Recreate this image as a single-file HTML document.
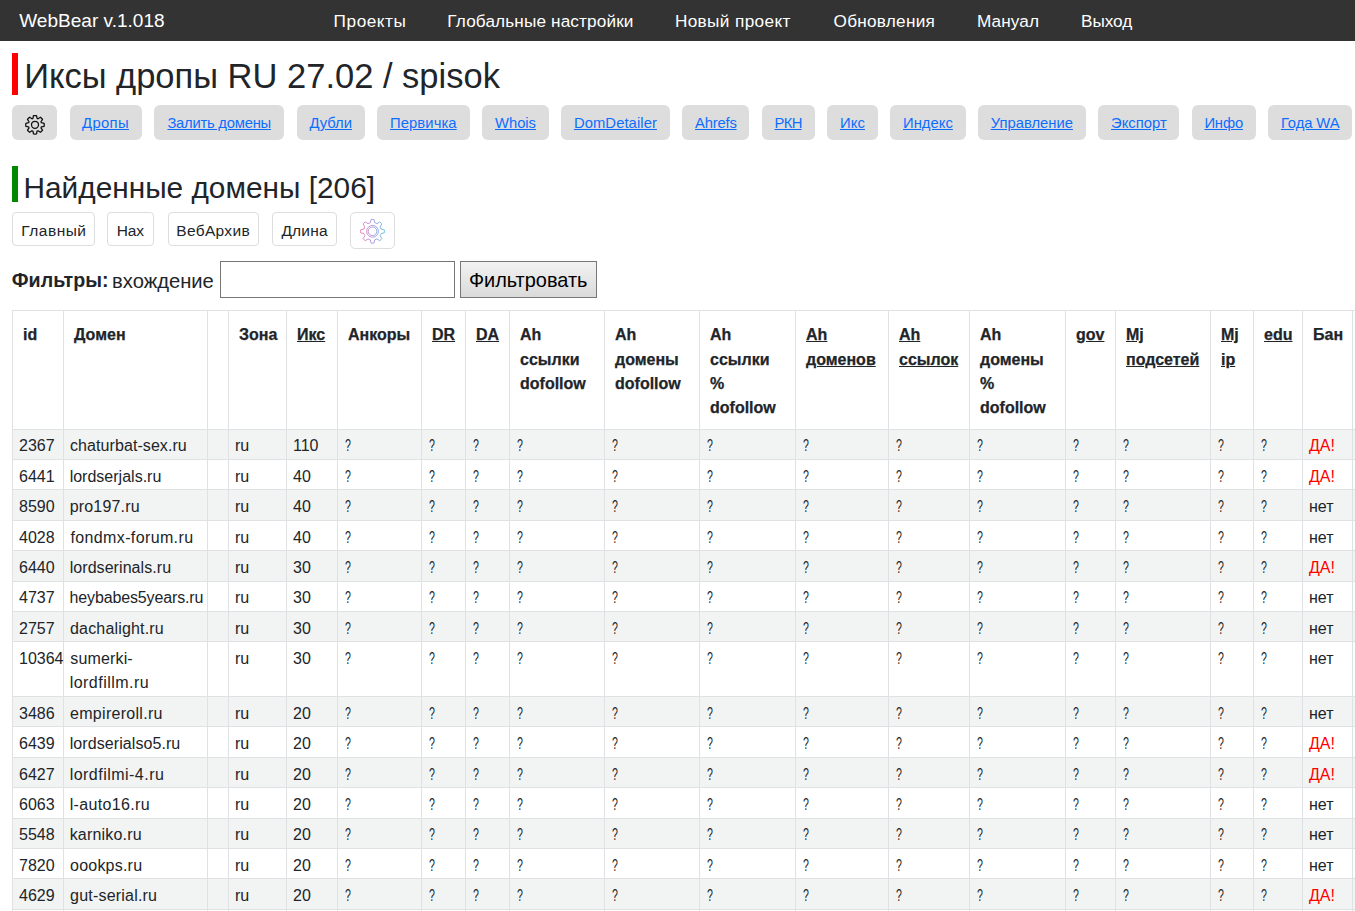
<!DOCTYPE html>
<html><head><meta charset="utf-8"><title>WebBear</title>
<style>
html,body{margin:0;padding:0;background:#fff;}
body{width:1355px;height:911px;overflow:hidden;position:relative;font-family:"Liberation Sans",sans-serif;color:#212529;}
.t{position:absolute;white-space:pre;line-height:1;}
.b{position:absolute;}
</style></head><body>
<div class="b" style="left:0px;top:0px;width:1355px;height:41px;background:#333;"></div>
<div class="t" style="left:19.20px;top:11.46px;font-size:19.06px;color:#fff;">WebBear v.1.018</div>
<div class="t" style="left:333.62px;top:13.34px;font-size:17.2px;color:#fff;letter-spacing:0.554px;">Проекты</div>
<div class="t" style="left:447.32px;top:13.34px;font-size:17.2px;color:#fff;letter-spacing:0.131px;">Глобальные настройки</div>
<div class="t" style="left:674.92px;top:13.34px;font-size:17.2px;color:#fff;letter-spacing:0.371px;">Новый проект</div>
<div class="t" style="left:833.53px;top:13.34px;font-size:17.2px;color:#fff;letter-spacing:0.258px;">Обновления</div>
<div class="t" style="left:976.92px;top:13.34px;font-size:17.2px;color:#fff;letter-spacing:0.124px;">Мануал</div>
<div class="t" style="left:1081.02px;top:13.34px;font-size:17.2px;color:#fff;letter-spacing:-0.049px;">Выход</div>
<div class="b" style="left:12px;top:53px;width:6px;height:42px;background:#f00;"></div>
<div class="t" style="left:24.14px;top:59.48px;font-size:34.51px;color:#212529;">Иксы дропы RU 27.02 / spisok</div>
<div class="b" style="left:12px;top:105px;width:45px;height:35px;background:#ddd;border-radius:6px;"></div>
<div class="b" style="left:70px;top:105px;width:72px;height:35px;background:#ddd;border-radius:6px;"></div>
<div class="t" style="left:82.00px;top:116.17px;font-size:14.8px;color:#0d6efd;text-decoration:underline;letter-spacing:0.372px;">Дропы</div>
<div class="b" style="left:154px;top:105px;width:130px;height:35px;background:#ddd;border-radius:6px;"></div>
<div class="t" style="left:167.40px;top:116.17px;font-size:14.8px;color:#0d6efd;text-decoration:underline;letter-spacing:-0.243px;">Залить домены</div>
<div class="b" style="left:297px;top:105px;width:68px;height:35px;background:#ddd;border-radius:6px;"></div>
<div class="t" style="left:309.40px;top:116.17px;font-size:14.8px;color:#0d6efd;text-decoration:underline;letter-spacing:-0.006px;">Дубли</div>
<div class="b" style="left:377px;top:105px;width:93px;height:35px;background:#ddd;border-radius:6px;"></div>
<div class="t" style="left:390.00px;top:116.17px;font-size:14.8px;color:#0d6efd;text-decoration:underline;letter-spacing:0.091px;">Первичка</div>
<div class="b" style="left:482px;top:105px;width:67px;height:35px;background:#ddd;border-radius:6px;"></div>
<div class="t" style="left:495.00px;top:116.17px;font-size:14.8px;color:#0d6efd;text-decoration:underline;letter-spacing:-0.024px;">Whois</div>
<div class="b" style="left:561px;top:105px;width:109px;height:35px;background:#ddd;border-radius:6px;"></div>
<div class="t" style="left:573.90px;top:116.17px;font-size:14.8px;color:#0d6efd;text-decoration:underline;letter-spacing:0.077px;">DomDetailer</div>
<div class="b" style="left:682px;top:105px;width:66.5px;height:35px;background:#ddd;border-radius:6px;"></div>
<div class="t" style="left:695.00px;top:116.17px;font-size:14.8px;color:#0d6efd;text-decoration:underline;letter-spacing:-0.196px;">Ahrefs</div>
<div class="b" style="left:762px;top:105px;width:53px;height:35px;background:#ddd;border-radius:6px;"></div>
<div class="t" style="left:774.60px;top:116.17px;font-size:14.8px;color:#0d6efd;text-decoration:underline;letter-spacing:-0.694px;">РКН</div>
<div class="b" style="left:827px;top:105px;width:51px;height:35px;background:#ddd;border-radius:6px;"></div>
<div class="t" style="left:840.00px;top:116.17px;font-size:14.8px;color:#0d6efd;text-decoration:underline;letter-spacing:0.107px;">Икс</div>
<div class="b" style="left:890px;top:105px;width:76px;height:35px;background:#ddd;border-radius:6px;"></div>
<div class="t" style="left:903.00px;top:116.17px;font-size:14.8px;color:#0d6efd;text-decoration:underline;letter-spacing:0.03px;">Индекс</div>
<div class="b" style="left:978px;top:105px;width:108px;height:35px;background:#ddd;border-radius:6px;"></div>
<div class="t" style="left:990.70px;top:116.17px;font-size:14.8px;color:#0d6efd;text-decoration:underline;letter-spacing:0.002px;">Управление</div>
<div class="b" style="left:1098px;top:105px;width:81px;height:35px;background:#ddd;border-radius:6px;"></div>
<div class="t" style="left:1111.00px;top:116.17px;font-size:14.8px;color:#0d6efd;text-decoration:underline;letter-spacing:0.013px;">Экспорт</div>
<div class="b" style="left:1192px;top:105px;width:64px;height:35px;background:#ddd;border-radius:6px;"></div>
<div class="t" style="left:1204.40px;top:116.17px;font-size:14.8px;color:#0d6efd;text-decoration:underline;letter-spacing:-0.155px;">Инфо</div>
<div class="b" style="left:1268px;top:105px;width:84px;height:35px;background:#ddd;border-radius:6px;"></div>
<div class="t" style="left:1280.90px;top:116.17px;font-size:14.8px;color:#0d6efd;text-decoration:underline;letter-spacing:-0.086px;">Года WA</div>
<div class="b" style="left:12px;top:166px;width:6px;height:36px;background:#080;"></div>
<div class="t" style="left:23.51px;top:172.55px;font-size:29.82px;color:#212529;">Найденные домены [206]</div>
<div class="b" style="left:12px;top:212px;width:82.5px;height:34px;border:1px solid #ddd;border-radius:4px;box-sizing:border-box;"></div>
<div class="t" style="left:21.26px;top:223.48px;font-size:15.5px;color:#212529;letter-spacing:0.493px;">Главный</div>
<div class="b" style="left:107px;top:212px;width:46.69999999999999px;height:34px;border:1px solid #ddd;border-radius:4px;box-sizing:border-box;"></div>
<div class="t" style="left:116.76px;top:223.48px;font-size:15.5px;color:#212529;letter-spacing:-0.098px;">Нах</div>
<div class="b" style="left:167.5px;top:212px;width:91.0px;height:34px;border:1px solid #ddd;border-radius:4px;box-sizing:border-box;"></div>
<div class="t" style="left:176.36px;top:223.48px;font-size:15.5px;color:#212529;letter-spacing:0.313px;">ВебАрхив</div>
<div class="b" style="left:272.3px;top:212px;width:65.19999999999999px;height:34px;border:1px solid #ddd;border-radius:4px;box-sizing:border-box;"></div>
<div class="t" style="left:281.42px;top:223.48px;font-size:15.5px;color:#212529;letter-spacing:0.21px;">Длина</div>
<div class="b" style="left:350px;top:212px;width:45px;height:37px;border:1px solid #ddd;border-radius:5px;box-sizing:border-box;"></div>
<div class="t" style="left:11.81px;top:271.05px;font-size:19.67px;font-weight:bold;color:#212529;">Фильтры:</div>
<div class="t" style="left:112.09px;top:270.60px;font-size:20.2px;color:#212529;">вхождение</div>
<div class="b" style="left:220px;top:261px;width:235px;height:37px;border:1px solid #767676;box-sizing:border-box;background:#fff;"></div>
<div class="b" style="left:460px;top:261px;width:137px;height:37px;border:1px solid #777;box-sizing:border-box;background:linear-gradient(#f2f2f2,#dadada);"></div>
<div class="t" style="left:468.90px;top:270.83px;font-size:19.93px;color:#000;">Фильтровать</div>
<svg class="b" style="left:0;top:0" width="80" height="160"><path d="M32.93 118.43L33.47 115.68A9.25 9.25 0 0 1 36.53 115.68L37.07 118.43A6.7 6.7 0 0 1 38.04 118.83L40.37 117.27A9.25 9.25 0 0 1 42.53 119.43L40.97 121.76A6.7 6.7 0 0 1 41.37 122.73L44.12 123.27A9.25 9.25 0 0 1 44.12 126.33L41.37 126.87A6.7 6.7 0 0 1 40.97 127.84L42.53 130.17A9.25 9.25 0 0 1 40.37 132.33L38.04 130.77A6.7 6.7 0 0 1 37.07 131.17L36.53 133.92A9.25 9.25 0 0 1 33.47 133.92L32.93 131.17A6.7 6.7 0 0 1 31.96 130.77L29.63 132.33A9.25 9.25 0 0 1 27.47 130.17L29.03 127.84A6.7 6.7 0 0 1 28.63 126.87L25.88 126.33A9.25 9.25 0 0 1 25.88 123.27L28.63 122.73A6.7 6.7 0 0 1 29.03 121.76L27.47 119.43A9.25 9.25 0 0 1 29.63 117.27L31.96 118.83A6.7 6.7 0 0 1 32.93 118.43Z" fill="none" stroke="#111" stroke-width="1.3" stroke-linejoin="round"/><circle cx="35" cy="124.8" r="3.5" fill="none" stroke="#111" stroke-width="1.3"/></svg>
<svg class="b" style="left:0;top:0" width="420" height="260"><defs><linearGradient id="gg" x1="360" y1="0" x2="385" y2="0" gradientUnits="userSpaceOnUse"><stop offset="0" stop-color="#e8508c"/><stop offset="0.5" stop-color="#8a6fd8"/><stop offset="1" stop-color="#2ba8e0"/></linearGradient></defs><path d="M370.22 222.80L371.05 219.49A11.9 11.9 0 0 1 373.95 219.49L374.78 222.80A8.8 8.8 0 0 1 376.90 223.68L379.83 221.92A11.9 11.9 0 0 1 381.88 223.97L380.12 226.90A8.8 8.8 0 0 1 381.00 229.02L384.31 229.85A11.9 11.9 0 0 1 384.31 232.75L381.00 233.58A8.8 8.8 0 0 1 380.12 235.70L381.88 238.63A11.9 11.9 0 0 1 379.83 240.68L376.90 238.92A8.8 8.8 0 0 1 374.78 239.80L373.95 243.11A11.9 11.9 0 0 1 371.05 243.11L370.22 239.80A8.8 8.8 0 0 1 368.10 238.92L365.17 240.68A11.9 11.9 0 0 1 363.12 238.63L364.88 235.70A8.8 8.8 0 0 1 364.00 233.58L360.69 232.75A11.9 11.9 0 0 1 360.69 229.85L364.00 229.02A8.8 8.8 0 0 1 364.88 226.90L363.12 223.97A11.9 11.9 0 0 1 365.17 221.92L368.10 223.68A8.8 8.8 0 0 1 370.22 222.80Z" fill="none" stroke="url(#gg)" stroke-width="0.8" stroke-opacity="0.85" stroke-linejoin="round"/><circle cx="372.5" cy="231.3" r="5.9" fill="none" stroke="url(#gg)" stroke-width="0.8" stroke-opacity="0.85"/><circle cx="372.5" cy="231.3" r="4.3" fill="none" stroke="url(#gg)" stroke-width="0.8" stroke-opacity="0.85"/></svg>
<div class="b" style="left:13px;top:430px;width:1342px;height:29px;background:#f2f3f3;"></div>
<div class="b" style="left:13px;top:490px;width:1342px;height:30px;background:#f2f3f3;"></div>
<div class="b" style="left:13px;top:551px;width:1342px;height:30px;background:#f2f3f3;"></div>
<div class="b" style="left:13px;top:612px;width:1342px;height:29px;background:#f2f3f3;"></div>
<div class="b" style="left:13px;top:697px;width:1342px;height:29px;background:#f2f3f3;"></div>
<div class="b" style="left:13px;top:758px;width:1342px;height:29px;background:#f2f3f3;"></div>
<div class="b" style="left:13px;top:819px;width:1342px;height:29px;background:#f2f3f3;"></div>
<div class="b" style="left:13px;top:879px;width:1342px;height:30px;background:#f2f3f3;"></div>
<div class="b" style="left:12px;top:310px;width:1343px;height:1px;background:#dfe1e4;"></div>
<div class="b" style="left:12px;top:429px;width:1343px;height:1px;background:#dfe1e4;"></div>
<div class="b" style="left:12px;top:459px;width:1343px;height:1px;background:#dfe1e4;"></div>
<div class="b" style="left:12px;top:489px;width:1343px;height:1px;background:#dfe1e4;"></div>
<div class="b" style="left:12px;top:520px;width:1343px;height:1px;background:#dfe1e4;"></div>
<div class="b" style="left:12px;top:550px;width:1343px;height:1px;background:#dfe1e4;"></div>
<div class="b" style="left:12px;top:581px;width:1343px;height:1px;background:#dfe1e4;"></div>
<div class="b" style="left:12px;top:611px;width:1343px;height:1px;background:#dfe1e4;"></div>
<div class="b" style="left:12px;top:641px;width:1343px;height:1px;background:#dfe1e4;"></div>
<div class="b" style="left:12px;top:696px;width:1343px;height:1px;background:#dfe1e4;"></div>
<div class="b" style="left:12px;top:726px;width:1343px;height:1px;background:#dfe1e4;"></div>
<div class="b" style="left:12px;top:757px;width:1343px;height:1px;background:#dfe1e4;"></div>
<div class="b" style="left:12px;top:787px;width:1343px;height:1px;background:#dfe1e4;"></div>
<div class="b" style="left:12px;top:818px;width:1343px;height:1px;background:#dfe1e4;"></div>
<div class="b" style="left:12px;top:848px;width:1343px;height:1px;background:#dfe1e4;"></div>
<div class="b" style="left:12px;top:878px;width:1343px;height:1px;background:#dfe1e4;"></div>
<div class="b" style="left:12px;top:909px;width:1343px;height:1px;background:#dfe1e4;"></div>
<div class="b" style="left:12px;top:310px;width:1px;height:601px;background:#dfe1e4;"></div>
<div class="b" style="left:63px;top:310px;width:1px;height:601px;background:#dfe1e4;"></div>
<div class="b" style="left:207px;top:310px;width:1px;height:601px;background:#dfe1e4;"></div>
<div class="b" style="left:228px;top:310px;width:1px;height:601px;background:#dfe1e4;"></div>
<div class="b" style="left:286px;top:310px;width:1px;height:601px;background:#dfe1e4;"></div>
<div class="b" style="left:337px;top:310px;width:1px;height:601px;background:#dfe1e4;"></div>
<div class="b" style="left:421px;top:310px;width:1px;height:601px;background:#dfe1e4;"></div>
<div class="b" style="left:465px;top:310px;width:1px;height:601px;background:#dfe1e4;"></div>
<div class="b" style="left:509px;top:310px;width:1px;height:601px;background:#dfe1e4;"></div>
<div class="b" style="left:604px;top:310px;width:1px;height:601px;background:#dfe1e4;"></div>
<div class="b" style="left:699px;top:310px;width:1px;height:601px;background:#dfe1e4;"></div>
<div class="b" style="left:795px;top:310px;width:1px;height:601px;background:#dfe1e4;"></div>
<div class="b" style="left:888px;top:310px;width:1px;height:601px;background:#dfe1e4;"></div>
<div class="b" style="left:969px;top:310px;width:1px;height:601px;background:#dfe1e4;"></div>
<div class="b" style="left:1065px;top:310px;width:1px;height:601px;background:#dfe1e4;"></div>
<div class="b" style="left:1115px;top:310px;width:1px;height:601px;background:#dfe1e4;"></div>
<div class="b" style="left:1210px;top:310px;width:1px;height:601px;background:#dfe1e4;"></div>
<div class="b" style="left:1253px;top:310px;width:1px;height:601px;background:#dfe1e4;"></div>
<div class="b" style="left:1302px;top:310px;width:1px;height:601px;background:#dfe1e4;"></div>
<div class="b" style="left:1352px;top:310px;width:1px;height:601px;background:#dfe1e4;"></div>
<div class="t" style="left:23.00px;top:327.25px;font-size:16px;font-weight:bold;color:#212529;-webkit-text-stroke:0.25px #212529;">id</div>
<div class="t" style="left:74.00px;top:327.25px;font-size:16px;font-weight:bold;color:#212529;-webkit-text-stroke:0.25px #212529;">Домен</div>
<div class="t" style="left:239.00px;top:327.25px;font-size:16px;font-weight:bold;color:#212529;-webkit-text-stroke:0.25px #212529;">Зона</div>
<div class="t" style="left:297.00px;top:327.25px;font-size:16px;font-weight:bold;color:#212529;text-decoration:underline;-webkit-text-stroke:0.25px #212529;">Икс</div>
<div class="t" style="left:348.00px;top:327.25px;font-size:16px;font-weight:bold;color:#212529;-webkit-text-stroke:0.25px #212529;">Анкоры</div>
<div class="t" style="left:432.00px;top:327.25px;font-size:16px;font-weight:bold;color:#212529;text-decoration:underline;-webkit-text-stroke:0.25px #212529;">DR</div>
<div class="t" style="left:476.00px;top:327.25px;font-size:16px;font-weight:bold;color:#212529;text-decoration:underline;-webkit-text-stroke:0.25px #212529;">DA</div>
<div class="t" style="left:520.00px;top:327.25px;font-size:16px;font-weight:bold;color:#212529;-webkit-text-stroke:0.25px #212529;">Ah</div>
<div class="t" style="left:520.00px;top:351.55px;font-size:16px;font-weight:bold;color:#212529;-webkit-text-stroke:0.25px #212529;">ссылки</div>
<div class="t" style="left:520.00px;top:375.85px;font-size:16px;font-weight:bold;color:#212529;-webkit-text-stroke:0.25px #212529;">dofollow</div>
<div class="t" style="left:615.00px;top:327.25px;font-size:16px;font-weight:bold;color:#212529;-webkit-text-stroke:0.25px #212529;">Ah</div>
<div class="t" style="left:615.00px;top:351.55px;font-size:16px;font-weight:bold;color:#212529;-webkit-text-stroke:0.25px #212529;">домены</div>
<div class="t" style="left:615.00px;top:375.85px;font-size:16px;font-weight:bold;color:#212529;-webkit-text-stroke:0.25px #212529;">dofollow</div>
<div class="t" style="left:710.00px;top:327.25px;font-size:16px;font-weight:bold;color:#212529;-webkit-text-stroke:0.25px #212529;">Ah</div>
<div class="t" style="left:710.00px;top:351.55px;font-size:16px;font-weight:bold;color:#212529;-webkit-text-stroke:0.25px #212529;">ссылки</div>
<div class="t" style="left:710.00px;top:375.85px;font-size:16px;font-weight:bold;color:#212529;-webkit-text-stroke:0.25px #212529;">%</div>
<div class="t" style="left:710.00px;top:400.15px;font-size:16px;font-weight:bold;color:#212529;-webkit-text-stroke:0.25px #212529;">dofollow</div>
<div class="t" style="left:806.00px;top:327.25px;font-size:16px;font-weight:bold;color:#212529;text-decoration:underline;-webkit-text-stroke:0.25px #212529;">Ah</div>
<div class="t" style="left:806.00px;top:351.55px;font-size:16px;font-weight:bold;color:#212529;text-decoration:underline;-webkit-text-stroke:0.25px #212529;">доменов</div>
<div class="t" style="left:899.00px;top:327.25px;font-size:16px;font-weight:bold;color:#212529;text-decoration:underline;-webkit-text-stroke:0.25px #212529;">Ah</div>
<div class="t" style="left:899.00px;top:351.55px;font-size:16px;font-weight:bold;color:#212529;text-decoration:underline;-webkit-text-stroke:0.25px #212529;">ссылок</div>
<div class="t" style="left:980.00px;top:327.25px;font-size:16px;font-weight:bold;color:#212529;-webkit-text-stroke:0.25px #212529;">Ah</div>
<div class="t" style="left:980.00px;top:351.55px;font-size:16px;font-weight:bold;color:#212529;-webkit-text-stroke:0.25px #212529;">домены</div>
<div class="t" style="left:980.00px;top:375.85px;font-size:16px;font-weight:bold;color:#212529;-webkit-text-stroke:0.25px #212529;">%</div>
<div class="t" style="left:980.00px;top:400.15px;font-size:16px;font-weight:bold;color:#212529;-webkit-text-stroke:0.25px #212529;">dofollow</div>
<div class="t" style="left:1076.00px;top:327.25px;font-size:16px;font-weight:bold;color:#212529;text-decoration:underline;-webkit-text-stroke:0.25px #212529;">gov</div>
<div class="t" style="left:1126.00px;top:327.25px;font-size:16px;font-weight:bold;color:#212529;text-decoration:underline;-webkit-text-stroke:0.25px #212529;">Mj</div>
<div class="t" style="left:1126.00px;top:351.55px;font-size:16px;font-weight:bold;color:#212529;text-decoration:underline;-webkit-text-stroke:0.25px #212529;">подсетей</div>
<div class="t" style="left:1221.00px;top:327.25px;font-size:16px;font-weight:bold;color:#212529;text-decoration:underline;-webkit-text-stroke:0.25px #212529;">Mj</div>
<div class="t" style="left:1221.00px;top:351.55px;font-size:16px;font-weight:bold;color:#212529;text-decoration:underline;-webkit-text-stroke:0.25px #212529;">ip</div>
<div class="t" style="left:1264.00px;top:327.25px;font-size:16px;font-weight:bold;color:#212529;text-decoration:underline;-webkit-text-stroke:0.25px #212529;">edu</div>
<div class="t" style="left:1313.00px;top:327.25px;font-size:16px;font-weight:bold;color:#212529;-webkit-text-stroke:0.25px #212529;">Бан</div>
<div class="t" style="left:19.00px;top:438.45px;font-size:16px;">2367</div>
<div class="t" style="left:70.06px;top:438.45px;font-size:16px;letter-spacing:0.072px;">chaturbat-sex.ru</div>
<div class="t" style="left:235.00px;top:438.45px;font-size:16px;">ru</div>
<div class="t" style="left:293.00px;top:438.45px;font-size:16px;">110</div>
<div class="t" style="left:344.80px;top:438.45px;font-size:16px;transform:scaleX(0.66);transform-origin:0 0;">?</div>
<div class="t" style="left:428.80px;top:438.45px;font-size:16px;transform:scaleX(0.66);transform-origin:0 0;">?</div>
<div class="t" style="left:472.80px;top:438.45px;font-size:16px;transform:scaleX(0.66);transform-origin:0 0;">?</div>
<div class="t" style="left:516.80px;top:438.45px;font-size:16px;transform:scaleX(0.66);transform-origin:0 0;">?</div>
<div class="t" style="left:611.80px;top:438.45px;font-size:16px;transform:scaleX(0.66);transform-origin:0 0;">?</div>
<div class="t" style="left:706.80px;top:438.45px;font-size:16px;transform:scaleX(0.66);transform-origin:0 0;">?</div>
<div class="t" style="left:802.80px;top:438.45px;font-size:16px;transform:scaleX(0.66);transform-origin:0 0;">?</div>
<div class="t" style="left:895.80px;top:438.45px;font-size:16px;transform:scaleX(0.66);transform-origin:0 0;">?</div>
<div class="t" style="left:976.80px;top:438.45px;font-size:16px;transform:scaleX(0.66);transform-origin:0 0;">?</div>
<div class="t" style="left:1072.80px;top:438.45px;font-size:16px;transform:scaleX(0.66);transform-origin:0 0;">?</div>
<div class="t" style="left:1122.80px;top:438.45px;font-size:16px;transform:scaleX(0.66);transform-origin:0 0;">?</div>
<div class="t" style="left:1217.80px;top:438.45px;font-size:16px;transform:scaleX(0.66);transform-origin:0 0;">?</div>
<div class="t" style="left:1260.80px;top:438.45px;font-size:16px;transform:scaleX(0.66);transform-origin:0 0;">?</div>
<div class="t" style="left:1309.00px;top:438.45px;font-size:16px;color:#f00;">ДА!</div>
<div class="t" style="left:19.00px;top:468.85px;font-size:16px;">6441</div>
<div class="t" style="left:69.66px;top:468.85px;font-size:16px;letter-spacing:0.006px;">lordserjals.ru</div>
<div class="t" style="left:235.00px;top:468.85px;font-size:16px;">ru</div>
<div class="t" style="left:293.00px;top:468.85px;font-size:16px;">40</div>
<div class="t" style="left:344.80px;top:468.85px;font-size:16px;transform:scaleX(0.66);transform-origin:0 0;">?</div>
<div class="t" style="left:428.80px;top:468.85px;font-size:16px;transform:scaleX(0.66);transform-origin:0 0;">?</div>
<div class="t" style="left:472.80px;top:468.85px;font-size:16px;transform:scaleX(0.66);transform-origin:0 0;">?</div>
<div class="t" style="left:516.80px;top:468.85px;font-size:16px;transform:scaleX(0.66);transform-origin:0 0;">?</div>
<div class="t" style="left:611.80px;top:468.85px;font-size:16px;transform:scaleX(0.66);transform-origin:0 0;">?</div>
<div class="t" style="left:706.80px;top:468.85px;font-size:16px;transform:scaleX(0.66);transform-origin:0 0;">?</div>
<div class="t" style="left:802.80px;top:468.85px;font-size:16px;transform:scaleX(0.66);transform-origin:0 0;">?</div>
<div class="t" style="left:895.80px;top:468.85px;font-size:16px;transform:scaleX(0.66);transform-origin:0 0;">?</div>
<div class="t" style="left:976.80px;top:468.85px;font-size:16px;transform:scaleX(0.66);transform-origin:0 0;">?</div>
<div class="t" style="left:1072.80px;top:468.85px;font-size:16px;transform:scaleX(0.66);transform-origin:0 0;">?</div>
<div class="t" style="left:1122.80px;top:468.85px;font-size:16px;transform:scaleX(0.66);transform-origin:0 0;">?</div>
<div class="t" style="left:1217.80px;top:468.85px;font-size:16px;transform:scaleX(0.66);transform-origin:0 0;">?</div>
<div class="t" style="left:1260.80px;top:468.85px;font-size:16px;transform:scaleX(0.66);transform-origin:0 0;">?</div>
<div class="t" style="left:1309.00px;top:468.85px;font-size:16px;color:#f00;">ДА!</div>
<div class="t" style="left:19.00px;top:499.25px;font-size:16px;">8590</div>
<div class="t" style="left:69.66px;top:499.25px;font-size:16px;letter-spacing:0.187px;">pro197.ru</div>
<div class="t" style="left:235.00px;top:499.25px;font-size:16px;">ru</div>
<div class="t" style="left:293.00px;top:499.25px;font-size:16px;">40</div>
<div class="t" style="left:344.80px;top:499.25px;font-size:16px;transform:scaleX(0.66);transform-origin:0 0;">?</div>
<div class="t" style="left:428.80px;top:499.25px;font-size:16px;transform:scaleX(0.66);transform-origin:0 0;">?</div>
<div class="t" style="left:472.80px;top:499.25px;font-size:16px;transform:scaleX(0.66);transform-origin:0 0;">?</div>
<div class="t" style="left:516.80px;top:499.25px;font-size:16px;transform:scaleX(0.66);transform-origin:0 0;">?</div>
<div class="t" style="left:611.80px;top:499.25px;font-size:16px;transform:scaleX(0.66);transform-origin:0 0;">?</div>
<div class="t" style="left:706.80px;top:499.25px;font-size:16px;transform:scaleX(0.66);transform-origin:0 0;">?</div>
<div class="t" style="left:802.80px;top:499.25px;font-size:16px;transform:scaleX(0.66);transform-origin:0 0;">?</div>
<div class="t" style="left:895.80px;top:499.25px;font-size:16px;transform:scaleX(0.66);transform-origin:0 0;">?</div>
<div class="t" style="left:976.80px;top:499.25px;font-size:16px;transform:scaleX(0.66);transform-origin:0 0;">?</div>
<div class="t" style="left:1072.80px;top:499.25px;font-size:16px;transform:scaleX(0.66);transform-origin:0 0;">?</div>
<div class="t" style="left:1122.80px;top:499.25px;font-size:16px;transform:scaleX(0.66);transform-origin:0 0;">?</div>
<div class="t" style="left:1217.80px;top:499.25px;font-size:16px;transform:scaleX(0.66);transform-origin:0 0;">?</div>
<div class="t" style="left:1260.80px;top:499.25px;font-size:16px;transform:scaleX(0.66);transform-origin:0 0;">?</div>
<div class="t" style="left:1309.00px;top:499.25px;font-size:16px;">нет</div>
<div class="t" style="left:19.00px;top:529.65px;font-size:16px;">4028</div>
<div class="t" style="left:70.46px;top:529.65px;font-size:16px;letter-spacing:0.373px;">fondmx-forum.ru</div>
<div class="t" style="left:235.00px;top:529.65px;font-size:16px;">ru</div>
<div class="t" style="left:293.00px;top:529.65px;font-size:16px;">40</div>
<div class="t" style="left:344.80px;top:529.65px;font-size:16px;transform:scaleX(0.66);transform-origin:0 0;">?</div>
<div class="t" style="left:428.80px;top:529.65px;font-size:16px;transform:scaleX(0.66);transform-origin:0 0;">?</div>
<div class="t" style="left:472.80px;top:529.65px;font-size:16px;transform:scaleX(0.66);transform-origin:0 0;">?</div>
<div class="t" style="left:516.80px;top:529.65px;font-size:16px;transform:scaleX(0.66);transform-origin:0 0;">?</div>
<div class="t" style="left:611.80px;top:529.65px;font-size:16px;transform:scaleX(0.66);transform-origin:0 0;">?</div>
<div class="t" style="left:706.80px;top:529.65px;font-size:16px;transform:scaleX(0.66);transform-origin:0 0;">?</div>
<div class="t" style="left:802.80px;top:529.65px;font-size:16px;transform:scaleX(0.66);transform-origin:0 0;">?</div>
<div class="t" style="left:895.80px;top:529.65px;font-size:16px;transform:scaleX(0.66);transform-origin:0 0;">?</div>
<div class="t" style="left:976.80px;top:529.65px;font-size:16px;transform:scaleX(0.66);transform-origin:0 0;">?</div>
<div class="t" style="left:1072.80px;top:529.65px;font-size:16px;transform:scaleX(0.66);transform-origin:0 0;">?</div>
<div class="t" style="left:1122.80px;top:529.65px;font-size:16px;transform:scaleX(0.66);transform-origin:0 0;">?</div>
<div class="t" style="left:1217.80px;top:529.65px;font-size:16px;transform:scaleX(0.66);transform-origin:0 0;">?</div>
<div class="t" style="left:1260.80px;top:529.65px;font-size:16px;transform:scaleX(0.66);transform-origin:0 0;">?</div>
<div class="t" style="left:1309.00px;top:529.65px;font-size:16px;">нет</div>
<div class="t" style="left:19.00px;top:560.05px;font-size:16px;">6440</div>
<div class="t" style="left:69.66px;top:560.05px;font-size:16px;letter-spacing:0.064px;">lordserinals.ru</div>
<div class="t" style="left:235.00px;top:560.05px;font-size:16px;">ru</div>
<div class="t" style="left:293.00px;top:560.05px;font-size:16px;">30</div>
<div class="t" style="left:344.80px;top:560.05px;font-size:16px;transform:scaleX(0.66);transform-origin:0 0;">?</div>
<div class="t" style="left:428.80px;top:560.05px;font-size:16px;transform:scaleX(0.66);transform-origin:0 0;">?</div>
<div class="t" style="left:472.80px;top:560.05px;font-size:16px;transform:scaleX(0.66);transform-origin:0 0;">?</div>
<div class="t" style="left:516.80px;top:560.05px;font-size:16px;transform:scaleX(0.66);transform-origin:0 0;">?</div>
<div class="t" style="left:611.80px;top:560.05px;font-size:16px;transform:scaleX(0.66);transform-origin:0 0;">?</div>
<div class="t" style="left:706.80px;top:560.05px;font-size:16px;transform:scaleX(0.66);transform-origin:0 0;">?</div>
<div class="t" style="left:802.80px;top:560.05px;font-size:16px;transform:scaleX(0.66);transform-origin:0 0;">?</div>
<div class="t" style="left:895.80px;top:560.05px;font-size:16px;transform:scaleX(0.66);transform-origin:0 0;">?</div>
<div class="t" style="left:976.80px;top:560.05px;font-size:16px;transform:scaleX(0.66);transform-origin:0 0;">?</div>
<div class="t" style="left:1072.80px;top:560.05px;font-size:16px;transform:scaleX(0.66);transform-origin:0 0;">?</div>
<div class="t" style="left:1122.80px;top:560.05px;font-size:16px;transform:scaleX(0.66);transform-origin:0 0;">?</div>
<div class="t" style="left:1217.80px;top:560.05px;font-size:16px;transform:scaleX(0.66);transform-origin:0 0;">?</div>
<div class="t" style="left:1260.80px;top:560.05px;font-size:16px;transform:scaleX(0.66);transform-origin:0 0;">?</div>
<div class="t" style="left:1309.00px;top:560.05px;font-size:16px;color:#f00;">ДА!</div>
<div class="t" style="left:19.00px;top:590.45px;font-size:16px;">4737</div>
<div class="t" style="left:69.58px;top:590.45px;font-size:16px;letter-spacing:-0.139px;">heybabes5years.ru</div>
<div class="t" style="left:235.00px;top:590.45px;font-size:16px;">ru</div>
<div class="t" style="left:293.00px;top:590.45px;font-size:16px;">30</div>
<div class="t" style="left:344.80px;top:590.45px;font-size:16px;transform:scaleX(0.66);transform-origin:0 0;">?</div>
<div class="t" style="left:428.80px;top:590.45px;font-size:16px;transform:scaleX(0.66);transform-origin:0 0;">?</div>
<div class="t" style="left:472.80px;top:590.45px;font-size:16px;transform:scaleX(0.66);transform-origin:0 0;">?</div>
<div class="t" style="left:516.80px;top:590.45px;font-size:16px;transform:scaleX(0.66);transform-origin:0 0;">?</div>
<div class="t" style="left:611.80px;top:590.45px;font-size:16px;transform:scaleX(0.66);transform-origin:0 0;">?</div>
<div class="t" style="left:706.80px;top:590.45px;font-size:16px;transform:scaleX(0.66);transform-origin:0 0;">?</div>
<div class="t" style="left:802.80px;top:590.45px;font-size:16px;transform:scaleX(0.66);transform-origin:0 0;">?</div>
<div class="t" style="left:895.80px;top:590.45px;font-size:16px;transform:scaleX(0.66);transform-origin:0 0;">?</div>
<div class="t" style="left:976.80px;top:590.45px;font-size:16px;transform:scaleX(0.66);transform-origin:0 0;">?</div>
<div class="t" style="left:1072.80px;top:590.45px;font-size:16px;transform:scaleX(0.66);transform-origin:0 0;">?</div>
<div class="t" style="left:1122.80px;top:590.45px;font-size:16px;transform:scaleX(0.66);transform-origin:0 0;">?</div>
<div class="t" style="left:1217.80px;top:590.45px;font-size:16px;transform:scaleX(0.66);transform-origin:0 0;">?</div>
<div class="t" style="left:1260.80px;top:590.45px;font-size:16px;transform:scaleX(0.66);transform-origin:0 0;">?</div>
<div class="t" style="left:1309.00px;top:590.45px;font-size:16px;">нет</div>
<div class="t" style="left:19.00px;top:620.85px;font-size:16px;">2757</div>
<div class="t" style="left:70.06px;top:620.85px;font-size:16px;letter-spacing:0.165px;">dachalight.ru</div>
<div class="t" style="left:235.00px;top:620.85px;font-size:16px;">ru</div>
<div class="t" style="left:293.00px;top:620.85px;font-size:16px;">30</div>
<div class="t" style="left:344.80px;top:620.85px;font-size:16px;transform:scaleX(0.66);transform-origin:0 0;">?</div>
<div class="t" style="left:428.80px;top:620.85px;font-size:16px;transform:scaleX(0.66);transform-origin:0 0;">?</div>
<div class="t" style="left:472.80px;top:620.85px;font-size:16px;transform:scaleX(0.66);transform-origin:0 0;">?</div>
<div class="t" style="left:516.80px;top:620.85px;font-size:16px;transform:scaleX(0.66);transform-origin:0 0;">?</div>
<div class="t" style="left:611.80px;top:620.85px;font-size:16px;transform:scaleX(0.66);transform-origin:0 0;">?</div>
<div class="t" style="left:706.80px;top:620.85px;font-size:16px;transform:scaleX(0.66);transform-origin:0 0;">?</div>
<div class="t" style="left:802.80px;top:620.85px;font-size:16px;transform:scaleX(0.66);transform-origin:0 0;">?</div>
<div class="t" style="left:895.80px;top:620.85px;font-size:16px;transform:scaleX(0.66);transform-origin:0 0;">?</div>
<div class="t" style="left:976.80px;top:620.85px;font-size:16px;transform:scaleX(0.66);transform-origin:0 0;">?</div>
<div class="t" style="left:1072.80px;top:620.85px;font-size:16px;transform:scaleX(0.66);transform-origin:0 0;">?</div>
<div class="t" style="left:1122.80px;top:620.85px;font-size:16px;transform:scaleX(0.66);transform-origin:0 0;">?</div>
<div class="t" style="left:1217.80px;top:620.85px;font-size:16px;transform:scaleX(0.66);transform-origin:0 0;">?</div>
<div class="t" style="left:1260.80px;top:620.85px;font-size:16px;transform:scaleX(0.66);transform-origin:0 0;">?</div>
<div class="t" style="left:1309.00px;top:620.85px;font-size:16px;">нет</div>
<div class="t" style="left:19.00px;top:651.25px;font-size:16px;">10364</div>
<div class="t" style="left:70.22px;top:651.25px;font-size:16px;letter-spacing:0.163px;">sumerki-</div>
<div class="t" style="left:69.66px;top:675.25px;font-size:16px;letter-spacing:0.475px;">lordfillm.ru</div>
<div class="t" style="left:235.00px;top:651.25px;font-size:16px;">ru</div>
<div class="t" style="left:293.00px;top:651.25px;font-size:16px;">30</div>
<div class="t" style="left:344.80px;top:651.25px;font-size:16px;transform:scaleX(0.66);transform-origin:0 0;">?</div>
<div class="t" style="left:428.80px;top:651.25px;font-size:16px;transform:scaleX(0.66);transform-origin:0 0;">?</div>
<div class="t" style="left:472.80px;top:651.25px;font-size:16px;transform:scaleX(0.66);transform-origin:0 0;">?</div>
<div class="t" style="left:516.80px;top:651.25px;font-size:16px;transform:scaleX(0.66);transform-origin:0 0;">?</div>
<div class="t" style="left:611.80px;top:651.25px;font-size:16px;transform:scaleX(0.66);transform-origin:0 0;">?</div>
<div class="t" style="left:706.80px;top:651.25px;font-size:16px;transform:scaleX(0.66);transform-origin:0 0;">?</div>
<div class="t" style="left:802.80px;top:651.25px;font-size:16px;transform:scaleX(0.66);transform-origin:0 0;">?</div>
<div class="t" style="left:895.80px;top:651.25px;font-size:16px;transform:scaleX(0.66);transform-origin:0 0;">?</div>
<div class="t" style="left:976.80px;top:651.25px;font-size:16px;transform:scaleX(0.66);transform-origin:0 0;">?</div>
<div class="t" style="left:1072.80px;top:651.25px;font-size:16px;transform:scaleX(0.66);transform-origin:0 0;">?</div>
<div class="t" style="left:1122.80px;top:651.25px;font-size:16px;transform:scaleX(0.66);transform-origin:0 0;">?</div>
<div class="t" style="left:1217.80px;top:651.25px;font-size:16px;transform:scaleX(0.66);transform-origin:0 0;">?</div>
<div class="t" style="left:1260.80px;top:651.25px;font-size:16px;transform:scaleX(0.66);transform-origin:0 0;">?</div>
<div class="t" style="left:1309.00px;top:651.25px;font-size:16px;">нет</div>
<div class="t" style="left:19.00px;top:705.85px;font-size:16px;">3486</div>
<div class="t" style="left:70.06px;top:705.85px;font-size:16px;letter-spacing:0.292px;">empireroll.ru</div>
<div class="t" style="left:235.00px;top:705.85px;font-size:16px;">ru</div>
<div class="t" style="left:293.00px;top:705.85px;font-size:16px;">20</div>
<div class="t" style="left:344.80px;top:705.85px;font-size:16px;transform:scaleX(0.66);transform-origin:0 0;">?</div>
<div class="t" style="left:428.80px;top:705.85px;font-size:16px;transform:scaleX(0.66);transform-origin:0 0;">?</div>
<div class="t" style="left:472.80px;top:705.85px;font-size:16px;transform:scaleX(0.66);transform-origin:0 0;">?</div>
<div class="t" style="left:516.80px;top:705.85px;font-size:16px;transform:scaleX(0.66);transform-origin:0 0;">?</div>
<div class="t" style="left:611.80px;top:705.85px;font-size:16px;transform:scaleX(0.66);transform-origin:0 0;">?</div>
<div class="t" style="left:706.80px;top:705.85px;font-size:16px;transform:scaleX(0.66);transform-origin:0 0;">?</div>
<div class="t" style="left:802.80px;top:705.85px;font-size:16px;transform:scaleX(0.66);transform-origin:0 0;">?</div>
<div class="t" style="left:895.80px;top:705.85px;font-size:16px;transform:scaleX(0.66);transform-origin:0 0;">?</div>
<div class="t" style="left:976.80px;top:705.85px;font-size:16px;transform:scaleX(0.66);transform-origin:0 0;">?</div>
<div class="t" style="left:1072.80px;top:705.85px;font-size:16px;transform:scaleX(0.66);transform-origin:0 0;">?</div>
<div class="t" style="left:1122.80px;top:705.85px;font-size:16px;transform:scaleX(0.66);transform-origin:0 0;">?</div>
<div class="t" style="left:1217.80px;top:705.85px;font-size:16px;transform:scaleX(0.66);transform-origin:0 0;">?</div>
<div class="t" style="left:1260.80px;top:705.85px;font-size:16px;transform:scaleX(0.66);transform-origin:0 0;">?</div>
<div class="t" style="left:1309.00px;top:705.85px;font-size:16px;">нет</div>
<div class="t" style="left:19.00px;top:736.25px;font-size:16px;">6439</div>
<div class="t" style="left:69.66px;top:736.25px;font-size:16px;letter-spacing:0.081px;">lordserialso5.ru</div>
<div class="t" style="left:235.00px;top:736.25px;font-size:16px;">ru</div>
<div class="t" style="left:293.00px;top:736.25px;font-size:16px;">20</div>
<div class="t" style="left:344.80px;top:736.25px;font-size:16px;transform:scaleX(0.66);transform-origin:0 0;">?</div>
<div class="t" style="left:428.80px;top:736.25px;font-size:16px;transform:scaleX(0.66);transform-origin:0 0;">?</div>
<div class="t" style="left:472.80px;top:736.25px;font-size:16px;transform:scaleX(0.66);transform-origin:0 0;">?</div>
<div class="t" style="left:516.80px;top:736.25px;font-size:16px;transform:scaleX(0.66);transform-origin:0 0;">?</div>
<div class="t" style="left:611.80px;top:736.25px;font-size:16px;transform:scaleX(0.66);transform-origin:0 0;">?</div>
<div class="t" style="left:706.80px;top:736.25px;font-size:16px;transform:scaleX(0.66);transform-origin:0 0;">?</div>
<div class="t" style="left:802.80px;top:736.25px;font-size:16px;transform:scaleX(0.66);transform-origin:0 0;">?</div>
<div class="t" style="left:895.80px;top:736.25px;font-size:16px;transform:scaleX(0.66);transform-origin:0 0;">?</div>
<div class="t" style="left:976.80px;top:736.25px;font-size:16px;transform:scaleX(0.66);transform-origin:0 0;">?</div>
<div class="t" style="left:1072.80px;top:736.25px;font-size:16px;transform:scaleX(0.66);transform-origin:0 0;">?</div>
<div class="t" style="left:1122.80px;top:736.25px;font-size:16px;transform:scaleX(0.66);transform-origin:0 0;">?</div>
<div class="t" style="left:1217.80px;top:736.25px;font-size:16px;transform:scaleX(0.66);transform-origin:0 0;">?</div>
<div class="t" style="left:1260.80px;top:736.25px;font-size:16px;transform:scaleX(0.66);transform-origin:0 0;">?</div>
<div class="t" style="left:1309.00px;top:736.25px;font-size:16px;color:#f00;">ДА!</div>
<div class="t" style="left:19.00px;top:766.65px;font-size:16px;">6427</div>
<div class="t" style="left:69.66px;top:766.65px;font-size:16px;letter-spacing:0.475px;">lordfilmi-4.ru</div>
<div class="t" style="left:235.00px;top:766.65px;font-size:16px;">ru</div>
<div class="t" style="left:293.00px;top:766.65px;font-size:16px;">20</div>
<div class="t" style="left:344.80px;top:766.65px;font-size:16px;transform:scaleX(0.66);transform-origin:0 0;">?</div>
<div class="t" style="left:428.80px;top:766.65px;font-size:16px;transform:scaleX(0.66);transform-origin:0 0;">?</div>
<div class="t" style="left:472.80px;top:766.65px;font-size:16px;transform:scaleX(0.66);transform-origin:0 0;">?</div>
<div class="t" style="left:516.80px;top:766.65px;font-size:16px;transform:scaleX(0.66);transform-origin:0 0;">?</div>
<div class="t" style="left:611.80px;top:766.65px;font-size:16px;transform:scaleX(0.66);transform-origin:0 0;">?</div>
<div class="t" style="left:706.80px;top:766.65px;font-size:16px;transform:scaleX(0.66);transform-origin:0 0;">?</div>
<div class="t" style="left:802.80px;top:766.65px;font-size:16px;transform:scaleX(0.66);transform-origin:0 0;">?</div>
<div class="t" style="left:895.80px;top:766.65px;font-size:16px;transform:scaleX(0.66);transform-origin:0 0;">?</div>
<div class="t" style="left:976.80px;top:766.65px;font-size:16px;transform:scaleX(0.66);transform-origin:0 0;">?</div>
<div class="t" style="left:1072.80px;top:766.65px;font-size:16px;transform:scaleX(0.66);transform-origin:0 0;">?</div>
<div class="t" style="left:1122.80px;top:766.65px;font-size:16px;transform:scaleX(0.66);transform-origin:0 0;">?</div>
<div class="t" style="left:1217.80px;top:766.65px;font-size:16px;transform:scaleX(0.66);transform-origin:0 0;">?</div>
<div class="t" style="left:1260.80px;top:766.65px;font-size:16px;transform:scaleX(0.66);transform-origin:0 0;">?</div>
<div class="t" style="left:1309.00px;top:766.65px;font-size:16px;color:#f00;">ДА!</div>
<div class="t" style="left:19.00px;top:797.05px;font-size:16px;">6063</div>
<div class="t" style="left:69.66px;top:797.05px;font-size:16px;letter-spacing:0.34px;">l-auto16.ru</div>
<div class="t" style="left:235.00px;top:797.05px;font-size:16px;">ru</div>
<div class="t" style="left:293.00px;top:797.05px;font-size:16px;">20</div>
<div class="t" style="left:344.80px;top:797.05px;font-size:16px;transform:scaleX(0.66);transform-origin:0 0;">?</div>
<div class="t" style="left:428.80px;top:797.05px;font-size:16px;transform:scaleX(0.66);transform-origin:0 0;">?</div>
<div class="t" style="left:472.80px;top:797.05px;font-size:16px;transform:scaleX(0.66);transform-origin:0 0;">?</div>
<div class="t" style="left:516.80px;top:797.05px;font-size:16px;transform:scaleX(0.66);transform-origin:0 0;">?</div>
<div class="t" style="left:611.80px;top:797.05px;font-size:16px;transform:scaleX(0.66);transform-origin:0 0;">?</div>
<div class="t" style="left:706.80px;top:797.05px;font-size:16px;transform:scaleX(0.66);transform-origin:0 0;">?</div>
<div class="t" style="left:802.80px;top:797.05px;font-size:16px;transform:scaleX(0.66);transform-origin:0 0;">?</div>
<div class="t" style="left:895.80px;top:797.05px;font-size:16px;transform:scaleX(0.66);transform-origin:0 0;">?</div>
<div class="t" style="left:976.80px;top:797.05px;font-size:16px;transform:scaleX(0.66);transform-origin:0 0;">?</div>
<div class="t" style="left:1072.80px;top:797.05px;font-size:16px;transform:scaleX(0.66);transform-origin:0 0;">?</div>
<div class="t" style="left:1122.80px;top:797.05px;font-size:16px;transform:scaleX(0.66);transform-origin:0 0;">?</div>
<div class="t" style="left:1217.80px;top:797.05px;font-size:16px;transform:scaleX(0.66);transform-origin:0 0;">?</div>
<div class="t" style="left:1260.80px;top:797.05px;font-size:16px;transform:scaleX(0.66);transform-origin:0 0;">?</div>
<div class="t" style="left:1309.00px;top:797.05px;font-size:16px;">нет</div>
<div class="t" style="left:19.00px;top:827.45px;font-size:16px;">5548</div>
<div class="t" style="left:69.66px;top:827.45px;font-size:16px;letter-spacing:0.193px;">karniko.ru</div>
<div class="t" style="left:235.00px;top:827.45px;font-size:16px;">ru</div>
<div class="t" style="left:293.00px;top:827.45px;font-size:16px;">20</div>
<div class="t" style="left:344.80px;top:827.45px;font-size:16px;transform:scaleX(0.66);transform-origin:0 0;">?</div>
<div class="t" style="left:428.80px;top:827.45px;font-size:16px;transform:scaleX(0.66);transform-origin:0 0;">?</div>
<div class="t" style="left:472.80px;top:827.45px;font-size:16px;transform:scaleX(0.66);transform-origin:0 0;">?</div>
<div class="t" style="left:516.80px;top:827.45px;font-size:16px;transform:scaleX(0.66);transform-origin:0 0;">?</div>
<div class="t" style="left:611.80px;top:827.45px;font-size:16px;transform:scaleX(0.66);transform-origin:0 0;">?</div>
<div class="t" style="left:706.80px;top:827.45px;font-size:16px;transform:scaleX(0.66);transform-origin:0 0;">?</div>
<div class="t" style="left:802.80px;top:827.45px;font-size:16px;transform:scaleX(0.66);transform-origin:0 0;">?</div>
<div class="t" style="left:895.80px;top:827.45px;font-size:16px;transform:scaleX(0.66);transform-origin:0 0;">?</div>
<div class="t" style="left:976.80px;top:827.45px;font-size:16px;transform:scaleX(0.66);transform-origin:0 0;">?</div>
<div class="t" style="left:1072.80px;top:827.45px;font-size:16px;transform:scaleX(0.66);transform-origin:0 0;">?</div>
<div class="t" style="left:1122.80px;top:827.45px;font-size:16px;transform:scaleX(0.66);transform-origin:0 0;">?</div>
<div class="t" style="left:1217.80px;top:827.45px;font-size:16px;transform:scaleX(0.66);transform-origin:0 0;">?</div>
<div class="t" style="left:1260.80px;top:827.45px;font-size:16px;transform:scaleX(0.66);transform-origin:0 0;">?</div>
<div class="t" style="left:1309.00px;top:827.45px;font-size:16px;">нет</div>
<div class="t" style="left:19.00px;top:857.85px;font-size:16px;">7820</div>
<div class="t" style="left:70.06px;top:857.85px;font-size:16px;letter-spacing:0.217px;">oookps.ru</div>
<div class="t" style="left:235.00px;top:857.85px;font-size:16px;">ru</div>
<div class="t" style="left:293.00px;top:857.85px;font-size:16px;">20</div>
<div class="t" style="left:344.80px;top:857.85px;font-size:16px;transform:scaleX(0.66);transform-origin:0 0;">?</div>
<div class="t" style="left:428.80px;top:857.85px;font-size:16px;transform:scaleX(0.66);transform-origin:0 0;">?</div>
<div class="t" style="left:472.80px;top:857.85px;font-size:16px;transform:scaleX(0.66);transform-origin:0 0;">?</div>
<div class="t" style="left:516.80px;top:857.85px;font-size:16px;transform:scaleX(0.66);transform-origin:0 0;">?</div>
<div class="t" style="left:611.80px;top:857.85px;font-size:16px;transform:scaleX(0.66);transform-origin:0 0;">?</div>
<div class="t" style="left:706.80px;top:857.85px;font-size:16px;transform:scaleX(0.66);transform-origin:0 0;">?</div>
<div class="t" style="left:802.80px;top:857.85px;font-size:16px;transform:scaleX(0.66);transform-origin:0 0;">?</div>
<div class="t" style="left:895.80px;top:857.85px;font-size:16px;transform:scaleX(0.66);transform-origin:0 0;">?</div>
<div class="t" style="left:976.80px;top:857.85px;font-size:16px;transform:scaleX(0.66);transform-origin:0 0;">?</div>
<div class="t" style="left:1072.80px;top:857.85px;font-size:16px;transform:scaleX(0.66);transform-origin:0 0;">?</div>
<div class="t" style="left:1122.80px;top:857.85px;font-size:16px;transform:scaleX(0.66);transform-origin:0 0;">?</div>
<div class="t" style="left:1217.80px;top:857.85px;font-size:16px;transform:scaleX(0.66);transform-origin:0 0;">?</div>
<div class="t" style="left:1260.80px;top:857.85px;font-size:16px;transform:scaleX(0.66);transform-origin:0 0;">?</div>
<div class="t" style="left:1309.00px;top:857.85px;font-size:16px;">нет</div>
<div class="t" style="left:19.00px;top:888.25px;font-size:16px;">4629</div>
<div class="t" style="left:70.06px;top:888.25px;font-size:16px;letter-spacing:0.208px;">gut-serial.ru</div>
<div class="t" style="left:235.00px;top:888.25px;font-size:16px;">ru</div>
<div class="t" style="left:293.00px;top:888.25px;font-size:16px;">20</div>
<div class="t" style="left:344.80px;top:888.25px;font-size:16px;transform:scaleX(0.66);transform-origin:0 0;">?</div>
<div class="t" style="left:428.80px;top:888.25px;font-size:16px;transform:scaleX(0.66);transform-origin:0 0;">?</div>
<div class="t" style="left:472.80px;top:888.25px;font-size:16px;transform:scaleX(0.66);transform-origin:0 0;">?</div>
<div class="t" style="left:516.80px;top:888.25px;font-size:16px;transform:scaleX(0.66);transform-origin:0 0;">?</div>
<div class="t" style="left:611.80px;top:888.25px;font-size:16px;transform:scaleX(0.66);transform-origin:0 0;">?</div>
<div class="t" style="left:706.80px;top:888.25px;font-size:16px;transform:scaleX(0.66);transform-origin:0 0;">?</div>
<div class="t" style="left:802.80px;top:888.25px;font-size:16px;transform:scaleX(0.66);transform-origin:0 0;">?</div>
<div class="t" style="left:895.80px;top:888.25px;font-size:16px;transform:scaleX(0.66);transform-origin:0 0;">?</div>
<div class="t" style="left:976.80px;top:888.25px;font-size:16px;transform:scaleX(0.66);transform-origin:0 0;">?</div>
<div class="t" style="left:1072.80px;top:888.25px;font-size:16px;transform:scaleX(0.66);transform-origin:0 0;">?</div>
<div class="t" style="left:1122.80px;top:888.25px;font-size:16px;transform:scaleX(0.66);transform-origin:0 0;">?</div>
<div class="t" style="left:1217.80px;top:888.25px;font-size:16px;transform:scaleX(0.66);transform-origin:0 0;">?</div>
<div class="t" style="left:1260.80px;top:888.25px;font-size:16px;transform:scaleX(0.66);transform-origin:0 0;">?</div>
<div class="t" style="left:1309.00px;top:888.25px;font-size:16px;color:#f00;">ДА!</div>

</body></html>
